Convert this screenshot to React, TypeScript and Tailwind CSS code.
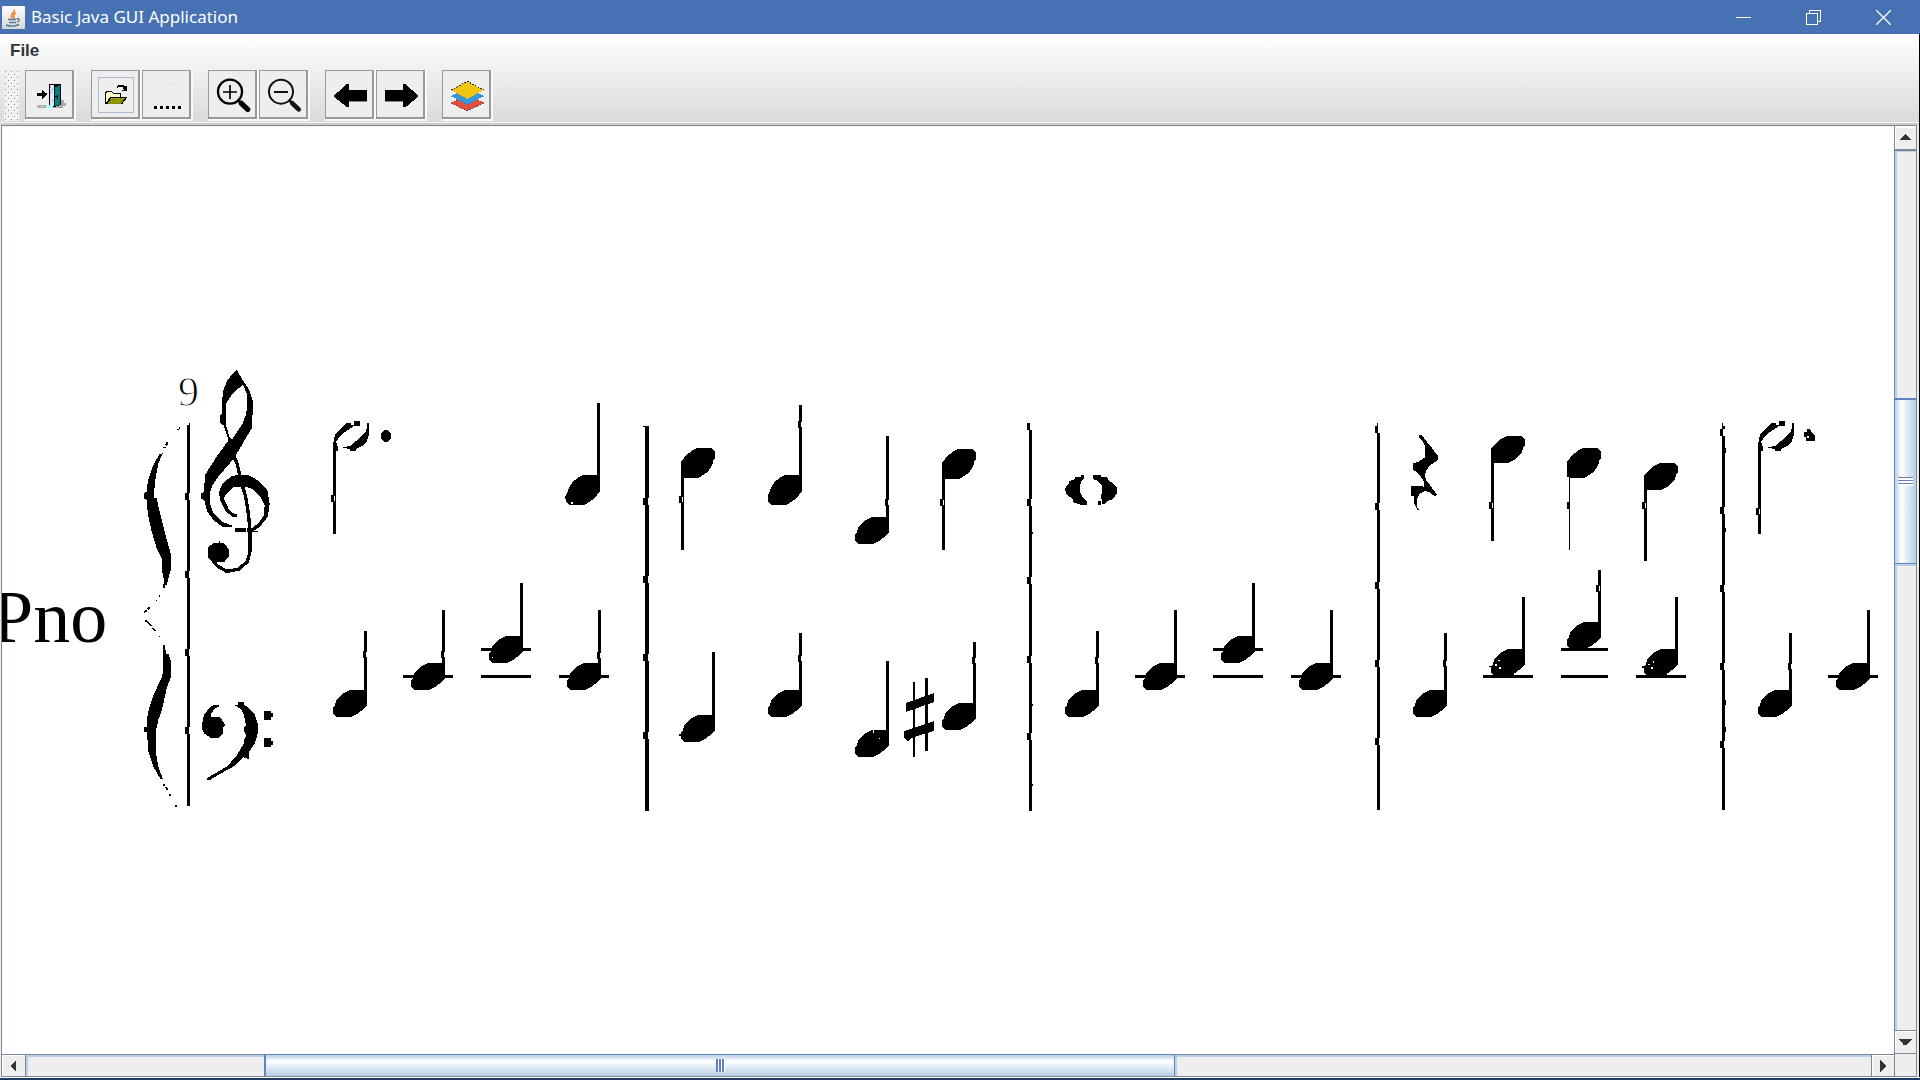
import type { ReactNode } from "react";

type Note = { x: number; y: number; h?: number; stem: number; down?: boolean; stemX?: number; stemW?: number };

const HEAD =
  "M17 0H31L34 1V15L28 21L24 24L18 27H4L1 25L0 23V18L2 15L3 11L7 6L11 3Z";

const NOTES: Note[] = [
  { x: 566, y: 475, h: 30, stem: 403 },
  { x: 681, y: 448, h: 30, stem: 550, down: true },
  { x: 768, y: 475, h: 30, stem: 405 },
  { x: 855, y: 517, stem: 436 },
  { x: 942, y: 449, h: 30, stem: 550, down: true },
  { x: 1491, y: 436, stem: 541, down: true },
  { x: 1567, y: 448, h: 30, stem: 550, down: true, stemX: 1569, stemW: 1 },
  { x: 1644, y: 463, stem: 561, down: true },
  { x: 333, y: 690, stem: 631 },
  { x: 411, y: 663, stem: 610 },
  { x: 489, y: 636, stem: 583 },
  { x: 567, y: 663, stem: 610 },
  { x: 681, y: 715, stem: 652 },
  { x: 768, y: 690, stem: 633 },
  { x: 855, y: 730, stem: 661 },
  { x: 942, y: 703, stem: 642 },
  { x: 1065, y: 690, stem: 631 },
  { x: 1143, y: 663, stem: 610 },
  { x: 1221, y: 636, stem: 583 },
  { x: 1299, y: 663, stem: 610 },
  { x: 1413, y: 690, stem: 633 },
  { x: 1491, y: 649, stem: 597 },
  { x: 1567, y: 622, stem: 570 },
  { x: 1644, y: 649, stem: 597 },
  { x: 1758, y: 690, stem: 633 },
  { x: 1836, y: 663, stem: 610 },
];

// x, y, width
const LEDGERS = [
  [403, 675, 50], [481, 648, 50], [481, 675, 50], [559, 675, 50],
  [1135, 675, 50], [1213, 648, 50], [1213, 675, 50], [1291, 675, 50],
  [1483, 675, 50], [1561, 648, 47], [1561, 675, 47], [1636, 675, 50],
  [1828, 675, 50],
];

const BARS = [
  { x: 187, w: 3, top: 425, bottom: 806, nubs: [493, 571, 649, 727] },
  { x: 645, w: 4, top: 426, bottom: 811, nubs: [498, 576, 654, 732] },
  { x: 1029, w: 3, top: 430, bottom: 811, nubs: [423, 499, 577, 656, 733] },
  { x: 1377, w: 3, top: 433, bottom: 810, nubs: [426, 503, 582, 660, 738] },
  { x: 1722, w: 3, top: 436, bottom: 810, nubs: [429, 507, 585, 663, 741] },
];

// x, y of the little breaks in the note stems
const STEM_NUBS = [
  [331, 495], [597, 418], [363, 651], [441, 651], [597, 652], [679, 496], [798, 421],
  [885, 499], [940, 499], [798, 655], [972, 657], [1095, 657], [1489, 502],
  [1567, 502], [1642, 502], [1443, 660], [1596, 585], [1788, 663], [1756, 508],
];

function HalfNote({ x }: { x: number }) {
  return (
    <g transform={`translate(${x} 421)`}>
      <path d="M0 22V17L2 12L7 7L12 2H17V4H20V0H26V5H20L14 9L8 13L4 18L2 21L4 26V30H2V113H-1V20Z" />
      <path d="M33 2H35V14L33 20L28 25L22 28V30H16V28L9 27V26L16 25L22 20L27 15L32 11V8L33 7Z" />
    </g>
  );
}

function Score() {
  return (
    <svg
      className="block h-[927px] w-[1892px] shrink-0"
      viewBox="2 127 1892 927"
      shapeRendering="crispEdges"
      role="img"
      aria-label="Piano score, system starting at measure 9"
    >
      <text x="-8" y="642" fontSize="74" fontFamily="'Liberation Serif', serif">Pno</text>
      <text x="178" y="406" fontSize="42" fontFamily="'Liberation Serif', serif" stroke="#fff" strokeWidth="1">9</text>

      {BARS.map((b) => (
        <g key={b.x}>
          <rect x={b.x} y={b.top} width={b.w} height={b.bottom - b.top} />
          {b.nubs.map((n) => (
            <g key={n}>
              <rect x={b.x + b.w - 1} y={n} width="1" height="7" fill="#fff" />
              <rect x={b.x - 2} y={n} width="3" height="7" />
            </g>
          ))}
        </g>
      ))}
      <path d="M189 423h1v3h-1zM643 426h3v1h-3zM1377 423h1v4h-1zM1722 423h1v6h-1zM1723 426h2v3h-2zM1725 448h1v5h-1zM1725 528h1v4h-1zM1725 700h1v5h-1zM1725 727h1v5h-1zM1032 532h1v2h-1zM1032 704h1v2h-1zM1032 784h1v2h-1z" />

      {LEDGERS.map(([x, y, w]) => (
        <rect key={`${x}-${y}`} x={x} y={y} width={w} height="3" />
      ))}

      {NOTES.map((n) => {
        const h = n.h ?? 27;
        const sx = n.stemX ?? (n.down ? n.x : n.x + 31);
        const mid = n.y + 14;
        return (
          <g key={`${n.x}-${n.y}`}>
            <path
              d={HEAD}
              transform={
                n.down
                  ? `translate(${n.x + 34} ${n.y + h}) scale(-1 ${-h / 27})`
                  : `translate(${n.x} ${n.y}) scale(1 ${h / 27})`
              }
            />
            <rect x={sx} y={Math.min(mid, n.stem)} width={n.stemW ?? 3} height={Math.abs(n.stem - mid)} />
          </g>
        );
      })}
      <path d="M498 675h8v3h-8zM1500 674h14v3h-14zM1570 647h18v3h-18zM1653 674h14v3h-14zM565 496h5v3h-5zM679 734h5v2h-5zM1489 666h4v1h-4zM1642 666h4v2h-4z" />
      <path
        d="M571 502h2v2h-2zM492 657h1v1h-1zM1498 660h2v1h-2zM1495 664h2v2h-2zM1499 667h2v2h-2zM1653 661h1v2h-1zM1651 667h2v2h-2zM1648 664h2v1h-2zM873 729h1v4h-1zM879 738h1v1h-1z"
        fill="#fff"
      />

      <HalfNote x={334} />
      <ellipse cx="386" cy="436" rx="5" ry="6" />
      <HalfNote x={1759} />
      <path d="M1807 429H1810L1812 433L1815 436V441H1806V437H1804V432H1807Z" />
      <rect x="1807" y="436" width="2" height="2" fill="#fff" />

      {STEM_NUBS.map(([x, y]) => (
        <g key={`${x}-${y}`}>
          <rect x={x + 3} y={y + 1} width="1" height="5" fill="#fff" />
          <rect x={x} y={y} width="3" height="7" />
        </g>
      ))}

      {/* whole note */}
      <path d="M1084 475H1081V477H1075V479L1069 481V484L1066 486L1065 490L1067 495L1072 498L1074 503L1080 504V505H1087V502L1083 498L1080 492V485L1082 480L1084 478Z" />
      <path d="M1093 475H1101V477H1107L1109 481L1113 483L1117 488V493L1113 499L1107 501L1105 504H1102V501L1101 497L1102 492V486L1098 481L1093 479Z" />
      <rect x="1098" y="501" width="3" height="4" />

      {/* sharp */}
      <rect x="913" y="682" width="2" height="75" />
      <rect x="925" y="678" width="3" height="73" />
      <path d="M906 703L934 693V702L906 712ZM904 731L934 721V731L911 738L908 741L904 738Z" />

      {/* quarter rest */}
      <g transform="translate(1370 390) scale(.33333)">
        <path d="M147 135H155L170 155L185 172L195 188L204 195V210L190 220L180 225L170 240L165 255L168 270L180 285L192 302L201 313L195 319L180 308L165 303L150 310L142 325L140 350L147 358L142 360L132 340V318H123V288H155L163 292L160 270L145 250L130 240V220L145 215L165 202V170L158 152L147 142Z" />
      </g>

      {/* treble clef and upper brace */}
      <g transform="translate(0 360) scale(.33333)">
        <path
          fillRule="evenodd"
          d="M710 30L700 38L680 65L668 95L666 160L661 165V190L670 195L686 240L650 290L615 345L612 395L604 400V416L613 420L622 455L640 480L670 502H695V496L665 485L640 460L630 430V400L636 378L655 350L685 315L705 290L755 205V165H758V120L745 85L728 60ZM729 74L740 100L742 130L739 160L728 190L697 237L688 232L677 190L678 130L700 98Z"
        />
        <path d="M710 470H698L677 455L660 420L657 395L670 368L695 348L722 344L747 346L775 362L802 390L809 430L804 470L780 500L757 515V503L775 490L792 465L794 435L782 412L760 388L735 380L700 382L680 400L672 415L685 445L698 460L710 462Z" />
        <path
          d="M700 285L711 310L720 348M728 380L737 410L745 460L750 510V575L742 605L715 628L680 634L652 618L640 603"
          fill="none"
          stroke="#000"
          strokeWidth="10"
        />
        <path d="M705 504H738V516H705ZM742 504H762V512H774V516H742Z" />
        <path d="M640 549H656V543H660V549H672L680 560L687 568V588L680 597L672 607H640L625 595V562Z" />
        <path d="M489 279L478 283L460 315L443 365L441 395L432 400V416L441 420L443 460L455 515L470 565L487 600V635L495 675H500L505 655L512 630V580L495 520L480 460L470 415H462V400L466 360L475 310Z" />
        <path d="M532 206H536V210H532ZM536 202H540V206H536ZM489 261H497V264H489ZM496 252L500 246H504V254L498 258ZM488 676H495V684H488ZM477 705H481V711H477Z" />
      </g>

      {/* bass clef and lower brace */}
      <g transform="translate(0 580) scale(.33333)">
        <path d="M490 195H495L498 222H506L512 240V292L500 325L487 385L475 420L467 455V515L475 560L489 598H482L460 560L445 515L441 458L432 455V442H441L443 400L460 345L487 290L490 240Z" />
        <path
          d="M432 98L440 91M443 88L449 82M468 62H472M477 48H481M490 22L493 14L501 4M435 124H441L455 139M458 144L467 153M477 170H481M489 615H494M496 620L503 629M507 646H513M525 678H531"
          fill="none"
          stroke="#000"
          strokeWidth="5"
        />
        <path d="M606 432L612 405L630 382L640 375H657V379L642 388L633 402V411H660L670 425L675 436L668 445V460L657 474H632L612 460L606 445Z" />
        <path d="M705 376H712L715 366H732V374L745 383L765 405L773 430V460L765 490L747 515V536H741L730 532L700 560L660 582L630 600H621V594L680 560L708 530L732 490V480L740 465L732 455V442L738 435L732 405L725 390L712 380Z" />
        <path d="M792 394H812V400H819V412H812V420H792ZM792 474H812V482H819V494H812V501H792Z" />
      </g>
    </svg>
  );
}

function ToolButton({ label, box, children }: { label: string; box: string; children: ReactNode }) {
  return (
    <button
      type="button"
      aria-label={label}
      className="size-[49px] border-t border-r-2 border-b-2 border-l border-[#999] bg-[#eee] shadow-[1px_1px_0_1px_#fafafa]"
    >
      <svg className="block h-[46px] w-[46px]" viewBox={box} shapeRendering="crispEdges">
        {children}
      </svg>
    </button>
  );
}

function Toolbar() {
  return (
    <div className="flex h-[54px] items-start pt-[2px] pl-1" role="toolbar" aria-label="Tools">
      <svg className="mr-[6px] block h-[51px] w-[15px] shrink-0" aria-hidden="true">
        <defs>
          <pattern id="grip" width="6" height="6" patternUnits="userSpaceOnUse">
            <rect width="6" height="6" fill="#f1f1f1" />
            <rect x="1" y="1" width="1" height="1" fill="#7a8a99" />
            <rect x="2" y="2" width="1" height="1" fill="#fff" />
            <rect x="4" y="4" width="1" height="1" fill="#7a8a99" />
            <rect x="5" y="5" width="1" height="1" fill="#fff" />
          </pattern>
        </defs>
        <rect width="15" height="51" fill="url(#grip)" />
      </svg>

      <div className="flex gap-[17px]">
        <ToolButton label="Exit" box="78 213 138 138">
          <path d="M110 315H190V325H110Z" fill="#aaa" />
          <path d="M182 300H192V309H198V317H190V323H182Z" fill="#aaa" />
          <path d="M115 318h3v3h-3zM122 318h3v3h-3zM130 318h3v3h-3z" fill="#eee" />
          <path d="M146 252H183V315L160 322H146Z" fill="#000" />
          <path d="M149 255H162V318H149Z" fill="#e4e4ff" />
          <path d="M151 260h3v3h-3zM155 268h3v3h-3zM151 277h3v3h-3zM155 301h3v3h-3z" fill="#77a" />
          <path d="M139 316H158V325H139Z" fill="#aff" />
          <path d="M164 262L180 255V313L164 320Z" fill="#008080" />
          <path d="M166 288h8v4h-8zM171 285h3v11h-3z" fill="#000" />
          <path d="M110 280H125V270L132 274L143 283L132 293L125 297V287H110Z" fill="#000" />
        </ToolButton>

        <div className="flex gap-[2px]">
          <ToolButton label="Open" box="276 213 138 138">
            <path d="M295 232H401V338H295Z" fill="none" stroke="#a9bcd3" strokeWidth="3" />
            <path d="M316 276L320 272H335L340 278H362V290H380V294L366 313H316Z" fill="#000" />
            <path d="M319 278L323 275H333L338 281H359V290H331L319 308Z" fill="#ffffc6" />
            <path d="M334 293H376L364 311H323Z" fill="#8c8c00" />
            <path
              d="M334 295h3v3h-3zM342 295h3v3h-3zM350 295h3v3h-3zM358 295h3v3h-3zM366 295h3v3h-3zM332 302h3v3h-3zM340 302h3v3h-3zM348 302h3v3h-3zM356 302h3v3h-3z"
              fill="#c6c600"
            />
            <path d="M351 258L356 254H369L376 262V257H381V273H366V269H372L366 260H356L354 263H351Z" fill="#000" />
          </ToolButton>
          <ToolButton label="More" box="429 213 138 138">
            <path d="M513 252H521V255H513ZM524 252H533V255H524Z" fill="#ddd" />
            <path d="M462 318H471V327H462ZM480 318H489V327H480ZM498 318H507V327H498ZM516 318H525V327H516ZM534 318H543V327H534Z" />
          </ToolButton>
        </div>

        <div className="flex gap-[2px]">
          <ToolButton label="Zoom in" box="627 213 138 138">
            <g shapeRendering="geometricPrecision" fill="none" stroke="#000">
              <circle cx="690" cy="275" r="36" strokeWidth="7" />
              <path d="M669 276H711M690 255V297" strokeWidth="5" />
              <path d="M714 300L725 311" strokeWidth="8" />
              <path d="M724 310L743 328" strokeWidth="16" strokeLinecap="round" />
            </g>
          </ToolButton>
          <ToolButton label="Zoom out" box="780 213 138 138">
            <g shapeRendering="geometricPrecision" fill="none" stroke="#111">
              <circle cx="843" cy="275" r="36" strokeWidth="6" />
              <path d="M822 276H864" strokeWidth="6" />
              <path d="M867 300L878 311" strokeWidth="8" />
              <path d="M877 310L896 328" strokeWidth="14" strokeLinecap="round" />
            </g>
          </ToolButton>
        </div>

        <div className="flex gap-[2px]">
          <ToolButton label="Previous" box="978 213 138 138">
            <path d="M1034 300H1101V306H1034Z" fill="#888" />
            <path d="M1003 286L1040 253H1048V270H1101V302H1048V321H1040L1003 291Z" />
          </ToolButton>
          <ToolButton label="Next" box="1131 213 138 138">
            <path d="M1155 300H1215V306H1155Z" fill="#888" />
            <path d="M1254 286L1217 253H1208V270H1155V302H1208V321H1217L1254 291Z" />
          </ToolButton>
        </div>

        <ToolButton label="Layers" box="1329 213 138 138">
          <path d="M1353 309L1402 285L1451 309L1402 333Z" fill="#e74c3c" stroke="#222" strokeWidth="2" strokeDasharray="5 4" />
          <path d="M1353 288L1402 264L1451 288L1402 315Z" fill="#3498db" />
          <path d="M1353 288L1402 315L1451 288" fill="none" stroke="#2c6f9e" strokeWidth="2" strokeDasharray="5 4" />
          <path d="M1353 270L1402 244L1451 270L1402 297Z" fill="#f1c40f" />
          <path d="M1353 270L1402 244L1451 270" fill="none" stroke="#222" strokeWidth="3" strokeDasharray="5 4" />
        </ToolButton>
      </div>
    </div>
  );
}

function JavaIcon() {
  return (
    <svg className="block h-[23px] w-[23px]" viewBox="0 0 23 23" aria-hidden="true">
      <defs>
        <linearGradient id="javaTile" x1="0" y1="0" x2="0" y2="1">
          <stop offset="0" stopColor="#fff" />
          <stop offset="1" stopColor="#d8d8d8" />
        </linearGradient>
      </defs>
      <rect width="23" height="23" rx="1" fill="url(#javaTile)" />
      <path d="M12 4C14 6 7 8 10 12M14 7C10 9 12 10 12 13" fill="none" stroke="#f07c1c" strokeWidth="1.6" />
      <path d="M6 13.5H14M7 16.5H14M4 19C8 20.500 13 20.500 17 18.500M14.500 13C18.500 12 17.500 15.500 15 16" fill="none" stroke="#50788f" strokeWidth="1.4" />
    </svg>
  );
}

export default function App() {
  return (
    <div className="flex h-screen flex-col overflow-hidden bg-[#eee] font-['Liberation_Sans',sans-serif] text-black">
      <header className="flex h-[34px] shrink-0 items-center bg-[#4672b4] pr-[2px] pl-[2px] text-white">
        <JavaIcon />
        <h1 className="ml-[6px] flex-1 font-['Noto_Sans',sans-serif] text-[17px] leading-[34px] font-normal">
          Basic Java GUI Application
        </h1>
        <button type="button" aria-label="Minimize" className="flex h-full w-[70px] items-center justify-center">
          <svg className="h-[15px] w-[15px]" viewBox="0 0 15 15" shapeRendering="crispEdges"><path d="M0 7h15v1H0z" fill="#fff" /></svg>
        </button>
        <button type="button" aria-label="Restore" className="flex h-full w-[70px] items-center justify-center">
          <svg className="h-[15px] w-[15px]" viewBox="0 0 15 15" fill="none" stroke="#fff" shapeRendering="crispEdges">
            <path d="M.5 3.5h11v11H.5zM3.5 3V.5h11v11H12" />
          </svg>
        </button>
        <button type="button" aria-label="Close" className="flex h-full w-[70px] items-center justify-center">
          <svg className="h-[15px] w-[15px]" viewBox="0 0 15 15" stroke="#fff" strokeWidth="1.300"><path d="M0 0L15 15M15 0L0 15" /></svg>
        </button>
      </header>

      <div className="flex min-h-0 flex-1 flex-col border-r border-black">
        <div className="h-[88px] shrink-0 bg-linear-to-b from-white to-[#dadada]">
          <nav className="flex h-[34px] items-center pl-[10px]">
            <button type="button" className="text-[17px] leading-5 font-bold text-[#333]">File</button>
          </nav>
          <Toolbar />
        </div>
        <div className="h-[3px] shrink-0 border-t border-[#f4f4f4] bg-[#ccc]" />

        <main className="mr-[2px] ml-px flex min-h-0 flex-1 flex-col border border-[#7a8a99] bg-[#eee]">
          <div className="flex min-h-0 flex-1">
            <div className="min-w-0 flex-1 overflow-hidden border-t border-[#f4f4f4] bg-white">
              <Score />
            </div>
            <div className="flex w-[22px] shrink-0 flex-col border-l border-[#7a8a99]">
              <button type="button" aria-label="Scroll up" className="flex h-[23px] shrink-0 items-start justify-start border-t-2 border-l border-white bg-[#eee] pt-[6px] pl-[3px]">
                <svg className="h-[6px] w-3" viewBox="0 0 12 6" shapeRendering="crispEdges"><path d="M6 0L12 6H0Z" fill="#333" /></svg>
              </button>
              <div className="flex min-h-0 flex-1 flex-col border-t-2 border-[#7a8a99]">
                <div className="min-h-0 grow-[248] basis-0 border-t border-l-2 border-[#b8cfe5]" />
                <div className="flex min-h-0 grow-[164] basis-0 flex-col items-center justify-center border-t-2 border-b border-[#6382bf] bg-linear-to-r from-[#b8cfe5] via-white via-30% to-[#b8cfe5] shadow-[-1px_0_0_#6382bf]">
                  <div className="flex w-[15px] flex-col">
                    <div className="h-[3px] border-t border-[#6382bf] bg-white" />
                    <div className="h-[3px] border-t border-[#6382bf] bg-white" />
                    <div className="h-[3px] border-t border-[#6382bf] bg-white" />
                  </div>
                </div>
                <div className="min-h-0 grow-[467] basis-0 border-t-2 border-l-2 border-[#b8cfe5]" />
              </div>
              <button type="button" aria-label="Scroll down" className="flex h-[24px] shrink-0 items-start justify-start border-y border-[#7a8a99] bg-[#eee] pt-2 pl-[3px] shadow-[inset_1px_1px_0_#fff]">
                <svg className="h-[6px] w-[14px]" viewBox="0 0 14 6" shapeRendering="crispEdges"><path d="M0 0H14L9 5V6H5V5Z" fill="#333" /></svg>
              </button>
            </div>
          </div>

          <div className="flex h-[22px] shrink-0">
            <div className="flex min-w-0 flex-1 border-t border-[#7a8a99]">
              <button type="button" aria-label="Scroll left" className="flex w-[23px] shrink-0 items-center justify-start border-t border-l border-white bg-[#eee] pl-[7px]">
                <svg className="h-3 w-[6px]" viewBox="0 0 6 12" shapeRendering="crispEdges"><path d="M6 0V12L0 6Z" fill="#333" /></svg>
              </button>
              <div className="flex min-w-0 flex-1 border-x border-[#7a8a99]">
                <div className="min-w-0 grow-[236] basis-0 border-t-2 border-l-2 border-[#b8cfe5]" />
                <div className="flex min-w-0 grow-[909] basis-0 items-center justify-center border-r border-l-2 border-[#6382bf] bg-linear-to-b from-[#b8cfe5] via-white via-30% to-[#b8cfe5] shadow-[0_-1px_0_#6382bf]">
                  <div className="flex h-[13px]">
                    <div className="w-[3px] border-l-2 border-[#6382bf] bg-white" />
                    <div className="w-[3px] border-l-2 border-[#6382bf] bg-white" />
                    <div className="w-[3px] border-l-2 border-[#6382bf] bg-white" />
                  </div>
                </div>
                <div className="min-w-0 grow-[694] basis-0 border-t-2 border-l-2 border-[#b8cfe5]" />
              </div>
              <button type="button" aria-label="Scroll right" className="flex w-[22px] shrink-0 items-center justify-start border-t border-l border-white bg-[#eee] pl-[7px]">
                <svg className="h-3 w-[6px]" viewBox="0 0 6 12" shapeRendering="crispEdges"><path d="M0 0V12L6 6Z" fill="#333" /></svg>
              </button>
            </div>
            <div className="w-[22px] shrink-0 border-l border-[#7a8a99] bg-[#eee]" />
          </div>
        </main>
      </div>
      <div className="h-[3px] shrink-0 border-t border-white bg-[#1f3a63]" />
    </div>
  );
}
